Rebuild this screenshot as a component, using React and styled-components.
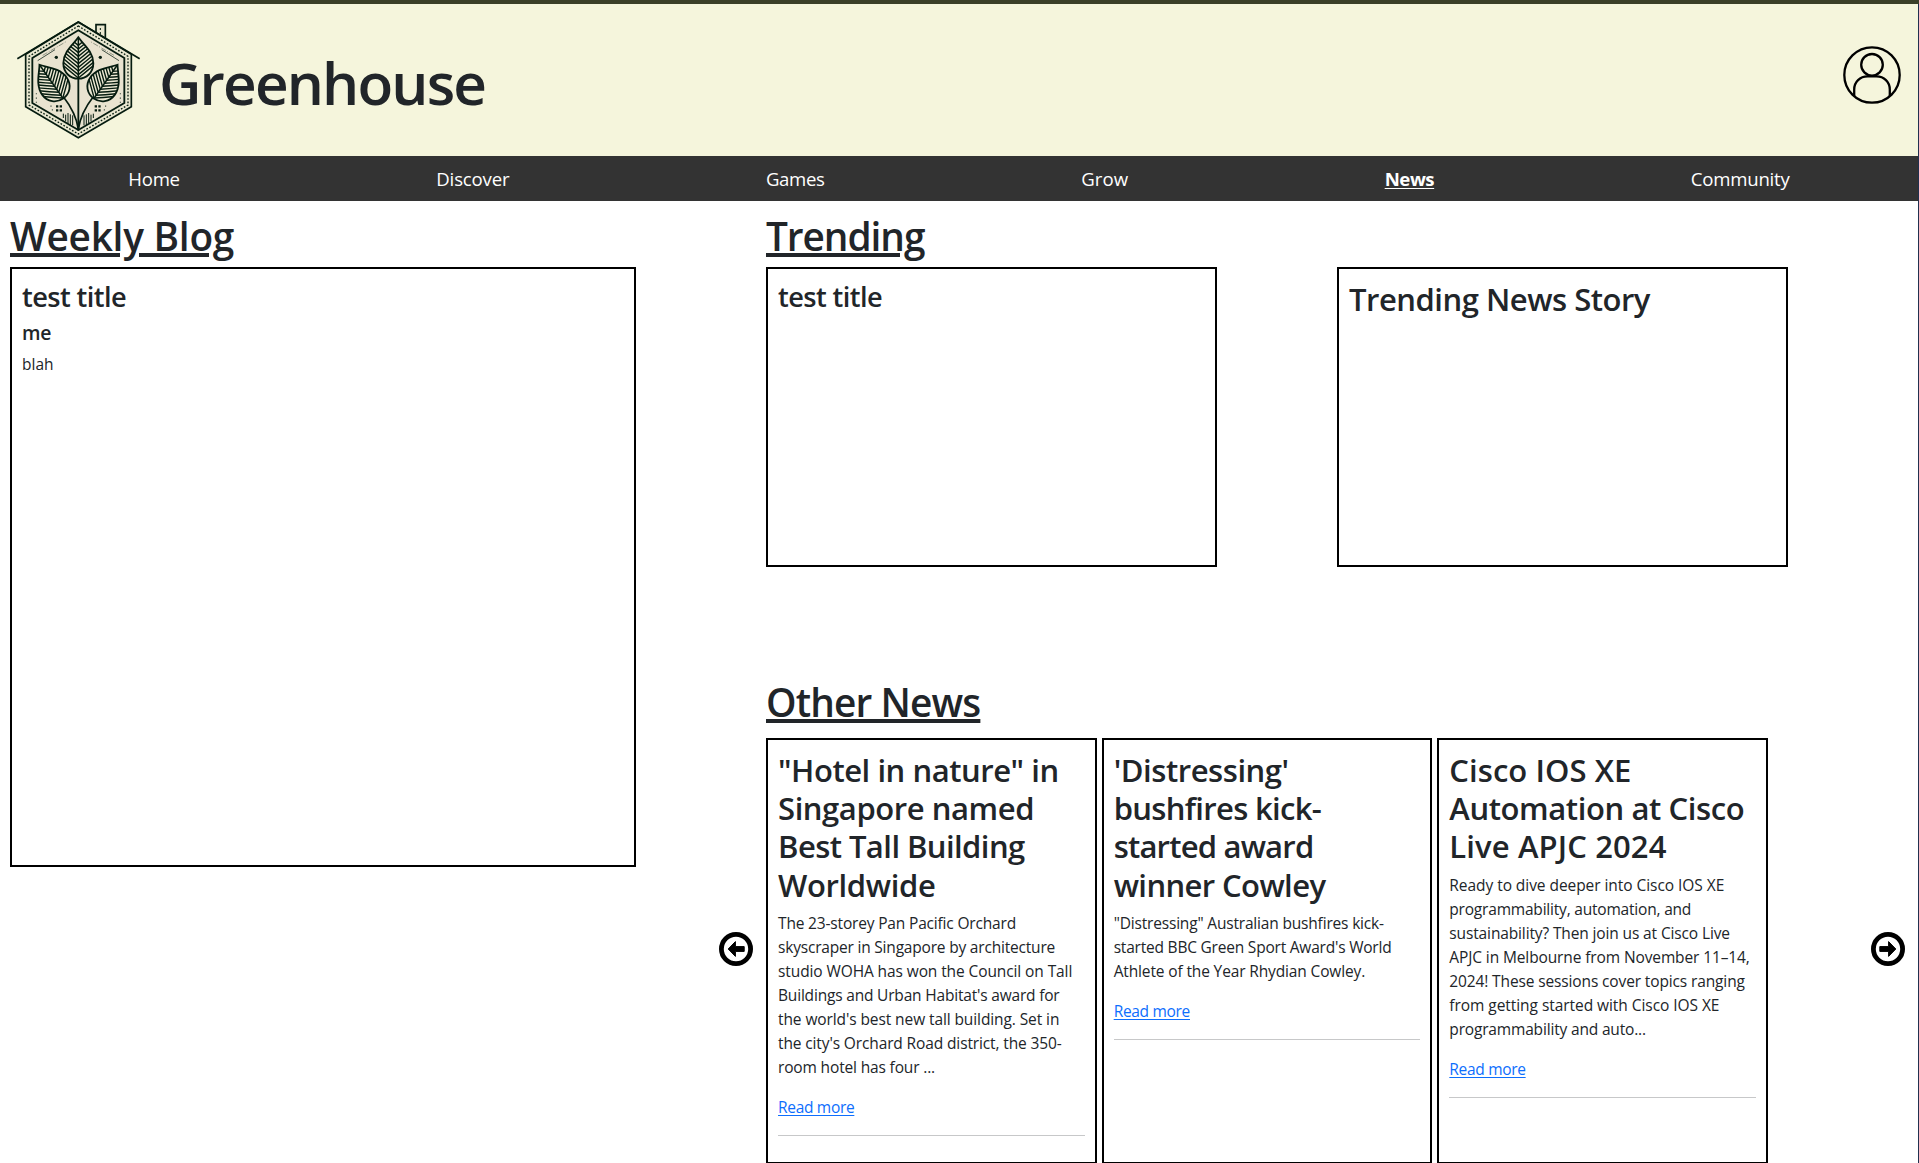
import React from 'react';
import styled, { createGlobalStyle } from 'styled-components';

const GlobalStyle = createGlobalStyle`
  *, *::before, *::after { box-sizing: border-box; }
  html, body { margin: 0; overflow: hidden; }
  body {
    background: #fff;
    color: #212529;
    font-family: "Open Sans", "Noto Sans", sans-serif;
    font-size: 15.5px;
    line-height: 24px;
  }
`;

const Page = styled.div`
  height: 1163px;
  overflow: hidden;
  border-top: 4px solid #3a3f28;
  background: #fff;
`;

const Frame = styled.div`
  height: 100%;
  border-right: 1px solid #21304f;
`;

const Header = styled.header`
  display: flex;
  justify-content: space-between;
  height: 152px;
  padding: 12px 17px 0 14px;
  background: #f5f5dc;
`;

const Brand = styled.div`
  display: flex;
  gap: 17px;
`;

const BrandName = styled.h1`
  margin: 0;
  padding-top: 30px;
  font-size: 58.5px;
  font-weight: 550;
  line-height: 72px;
  letter-spacing: -1.83px;
`;

const LogoSvg = styled.svg`
  display: block;
  width: 128px;
  height: 126px;
`;

const AvatarSvg = styled.svg`
  display: block;
  width: 58px;
  height: 58px;
  margin-top: 30px;
`;

const Nav = styled.nav`
  display: flex;
  justify-content: space-around;
  height: 45px;
  padding-top: 8px;
  background: #333;
`;

const NavLink = styled.a`
  color: #fff;
  font-size: 18.6px;
  line-height: 30px;
  font-weight: ${(p) => (p.$active ? 700 : 400)};
  text-decoration: ${(p) => (p.$active ? 'underline' : 'none')};
  text-decoration-thickness: 1px;
  text-underline-offset: 2px;
  letter-spacing: ${(p) => p.$tracking}px;
`;

const Main = styled.main`
  display: flex;
  gap: 83px;
  padding: 10px 0 0 10px;
`;

const BlogColumn = styled.section`
  width: 626px;
`;

const NewsColumn = styled.section`
  display: flex;
  flex-direction: column;
  width: 1186px;
`;

const SectionTitle = styled.h1`
  margin: 0 0 ${(p) => p.$gap ?? 7}px;
  padding-top: 1px;
  padding-left: ${(p) => p.$indent ?? 0}px;
  font-size: 38.8px;
  font-weight: 550;
  line-height: 48px;
  letter-spacing: ${(p) => p.$tracking}px;
  text-decoration: underline;
  text-decoration-thickness: 4px;
  text-underline-offset: 2px;
`;

const Box = styled.article`
  width: ${(p) => p.$width}px;
  height: ${(p) => p.$height}px;
  padding: 10px;
  border: 2px solid #000;
  white-space: nowrap;
`;

const BoxTitle = styled.h3`
  margin: 0 0 7px;
  padding-top: 1px;
  font-size: 27.2px;
  font-weight: 550;
  line-height: 33.6px;
  letter-spacing: -0.57px;
`;

const Author = styled.h5`
  margin: 0 0 7px;
  font-size: 19.4px;
  font-weight: 550;
  line-height: 24px;
  letter-spacing: -0.3px;
`;

const Paragraph = styled.p`
  margin: 0 0 16px;
`;

const StoryTitle = styled.h2`
  margin: 0 0 7px;
  padding-top: 0.5px;
  font-size: 31px;
  font-weight: 550;
  line-height: 38.4px;
`;

const Line = styled.span`
  display: block;
  letter-spacing: ${(p) => p.$tracking}px;
`;

const TrendingRow = styled.div`
  display: flex;
  gap: 120px;
  padding-left: 47px;
  margin-bottom: 110px;
`;

const Carousel = styled.div`
  display: flex;
  justify-content: space-between;
`;

const CardRow = styled.div`
  display: flex;
  gap: 5px;
  margin-right: 90px;
`;

const ArrowButton = styled.button`
  width: 34px;
  height: 34px;
  margin: 194px 0 0;
  padding: 0;
  border: 0;
  background: none;
`;

const ArrowSvg = styled.svg`
  display: block;
  transform: ${(p) => (p.$flip ? 'scaleX(-1)' : 'none')};
`;

const ReadMore = styled.a`
  color: #0d6efd;
  letter-spacing: -0.31px;
  text-decoration: underline;
  text-decoration-thickness: 1px;
  text-underline-offset: 2px;
`;

const Divider = styled.hr`
  margin: 16px 0;
  border: 0;
  border-top: 1px solid #c7c8c9;
`;

const LEAF = 'M0,-62 C12,-44 45,-20 45,16 C45,44 24,62 0,62 C-24,62 -45,44 -45,16 C-45,-20 -12,-44 0,-62 Z';
const VEINS = [-38, -27, -16, -5, 6, 17, 28, 39, 50, 60];

function Leaf({ transform }) {
  return (
    <g transform={transform}>
      <path d={LEAF} fill="#ece8d3" stroke="#061c10" strokeWidth="5.5" />
      <g clipPath="url(#leaf)" fill="none" stroke="#061c10" strokeWidth="4.2">
        {VEINS.map((y) => (
          <path key={y} d={`M-46,${y - 38} Q-20,${y - 16} 0,${y} Q20,${y - 16} 46,${y - 38}`} />
        ))}
      </g>
      <path d="M0,-60 V62" stroke="#061c10" strokeWidth="4.6" />
    </g>
  );
}

function HalfDetails({ transform }) {
  return (
    <g transform={transform} fill="none" stroke="#061c10">
      <path d="M-122,8 L-70,-25" strokeWidth="2.2" />
      <path d="M-107,-8 L-35,-50" strokeWidth="1.6" strokeDasharray="16 5 3 4" opacity="0.75" />
      <circle cx="-66" cy="-2" r="5" fill="#061c10" stroke="none" />
      <path d="M-67,145 h7 m4,0 h7 M-67,157 h7 m4,0 h7" strokeWidth="7" />
      <path d="M-82,142 v5 M-78,153 v5 M-126,105 v4 M-126,118 v5 M-126,131 v4" strokeWidth="2.5" opacity="0.8" />
      <path d="M-45,167 V180 M-38,170 V190 M-31,165 V196 M-24,169 V201 M-17,172 V202" strokeWidth="3" />
      <path d="M-47,113 C-26,140 -5,174 0,214" strokeWidth="5" />
    </g>
  );
}

function Logo() {
  return (
    <LogoSvg viewBox="42 48 384 378" aria-label="Greenhouse logo">
      <defs>
        <clipPath id="leaf"><path d={LEAF} /></clipPath>
      </defs>
      <path d="M288,104 V74 H316 V122" fill="#e9e7d0" stroke="#061c10" strokeWidth="5" />
      <path d="M301,84 v6 M301,96 v6" stroke="#061c10" strokeWidth="3" />
      <path d="M235,66 L394,163 V320 L235,413 L77,320 V163 Z" fill="#e9e7d0" stroke="#061c10" strokeWidth="5" />
      <path d="M52,176 L235,66 L419,176" fill="none" stroke="#061c10" strokeWidth="5" />
      <path
        d="M235,78 L384,169 V315 L235,402 L87,315 V169 Z"
        fill="none"
        stroke="#061c10"
        strokeWidth="4"
        strokeDasharray="5 5"
      />
      <path d="M235,91 L373,174 V309 L235,390 L97,309 V174 Z" fill="#e9e3d0" stroke="#061c10" strokeWidth="5.5" />
      <HalfDetails transform="translate(235 174)" />
      <HalfDetails transform="translate(235 174) scale(-1 1)" />
      <path d="M235,236 V392" stroke="#061c10" strokeWidth="5.5" />
      <Leaf transform="translate(235 174)" />
      <Leaf transform="translate(154 245) rotate(-35)" />
      <Leaf transform="translate(317 245) rotate(35)" />
    </LogoSvg>
  );
}

function Avatar() {
  return (
    <AvatarSvg viewBox="0 0 58 58" fill="none" stroke="#000" strokeWidth="2.3" aria-label="Account">
      <circle cx="29" cy="29" r="27.7" />
      <circle cx="29" cy="18.8" r="10.8" />
      <path d="M11.2,50 V43.5 C11.2,36 17,30.4 24.5,30.4 H33.5 C41,30.4 46.8,36 46.8,43.5 V50" />
    </AvatarSvg>
  );
}

function Arrow({ flip }) {
  return (
    <ArrowButton aria-label={flip ? 'Next' : 'Previous'}>
      <ArrowSvg $flip={flip} width="34" height="34" viewBox="0 0 34 34">
        <circle cx="17" cy="17" r="14.6" fill="none" stroke="#000" strokeWidth="4.8" />
        <path
          d="M9.2,17 L16.4,9.6 V14.6 H25.2 V19.4 H16.4 V24.4 Z"
          fill="#000"
          stroke="#000"
          strokeWidth="1"
          strokeLinejoin="round"
        />
      </ArrowSvg>
    </ArrowButton>
  );
}

const NAV = [
  ['Home', -0.26],
  ['Discover', -0.18],
  ['Games', -0.33],
  ['Grow', 0.07],
  ['News', -0.44],
  ['Community', -0.2],
];

const STORIES = [
  {
    title: [
      ['"Hotel in nature" in', -0.45],
      ['Singapore named', -0.43],
      ['Best Tall Building', -0.56],
      ['Worldwide', -0.35],
    ],
    body: [
      ['The 23-storey Pan Pacific Orchard', -0.17],
      ['skyscraper in Singapore by architecture', -0.196],
      ['studio WOHA has won the Council on Tall', -0.101],
      ["Buildings and Urban Habitat's award for", -0.188],
      ["the world's best new tall building. Set in", -0.098],
      ["the city's Orchard Road district, the 350-", -0.125],
      ['room hotel has four ...', -0.153],
    ],
  },
  {
    title: [
      ["'Distressing'", -0.44],
      ['bushfires kick-', -0.67],
      ['started award', -0.8],
      ['winner Cowley', -0.6],
    ],
    body: [
      ['"Distressing" Australian bushfires kick-', -0.178],
      ["started BBC Green Sport Award's World", -0.21],
      ['Athlete of the Year Rhydian Cowley.', -0.14],
    ],
  },
  {
    title: [
      ['Cisco IOS XE', 0.06],
      ['Automation at Cisco', -0.4],
      ['Live APJC 2024', 0.13],
    ],
    body: [
      ['Ready to dive deeper into Cisco IOS XE', -0.055],
      ['programmability, automation, and', -0.2],
      ['sustainability? Then join us at Cisco Live', -0.13],
      ['APJC in Melbourne from November 11–14,', -0.115],
      ['2024! These sessions cover topics ranging', -0.13],
      ['from getting started with Cisco IOS XE', -0.055],
      ['programmability and auto...', -0.17],
    ],
  },
];

const renderLines = (lines) =>
  lines.map(([text, tracking]) => (
    <Line key={text} $tracking={tracking}>{text}</Line>
  ));

function StoryCard({ story }) {
  return (
    <Box $width={330.66} $height={426}>
      <StoryTitle>{renderLines(story.title)}</StoryTitle>
      <Paragraph>{renderLines(story.body)}</Paragraph>
      <ReadMore href="#">Read more</ReadMore>
      <Divider />
    </Box>
  );
}

export default function App() {
  return (
    <Page>
      <GlobalStyle />
      <Frame>
        <Header>
          <Brand>
            <Logo />
            <BrandName>Greenhouse</BrandName>
          </Brand>
          <Avatar />
        </Header>
        <Nav>
          {NAV.map(([label, tracking]) => (
            <NavLink key={label} $active={label === 'News'} $tracking={tracking}>{label}</NavLink>
          ))}
        </Nav>
        <Main>
          <BlogColumn>
            <SectionTitle $tracking={-0.25}>Weekly Blog</SectionTitle>
            <Box $width={626} $height={600}>
              <BoxTitle>test title</BoxTitle>
              <Author>me</Author>
              <Paragraph>blah</Paragraph>
            </Box>
          </BlogColumn>
          <NewsColumn>
            <SectionTitle $indent={47} $tracking={-1.05}>Trending</SectionTitle>
            <TrendingRow>
              <Box $width={451} $height={300}>
                <BoxTitle>test title</BoxTitle>
              </Box>
              <Box $width={451} $height={300}>
                <StoryTitle><Line $tracking={-0.48}>Trending News Story</Line></StoryTitle>
              </Box>
            </TrendingRow>
            <SectionTitle $indent={47} $gap={12} $tracking={-0.86}>Other News</SectionTitle>
            <Carousel>
              <Arrow />
              <CardRow>
                {STORIES.map((story) => (
                  <StoryCard key={story.title[0][0]} story={story} />
                ))}
              </CardRow>
              <Arrow flip />
            </Carousel>
          </NewsColumn>
        </Main>
      </Frame>
    </Page>
  );
}
